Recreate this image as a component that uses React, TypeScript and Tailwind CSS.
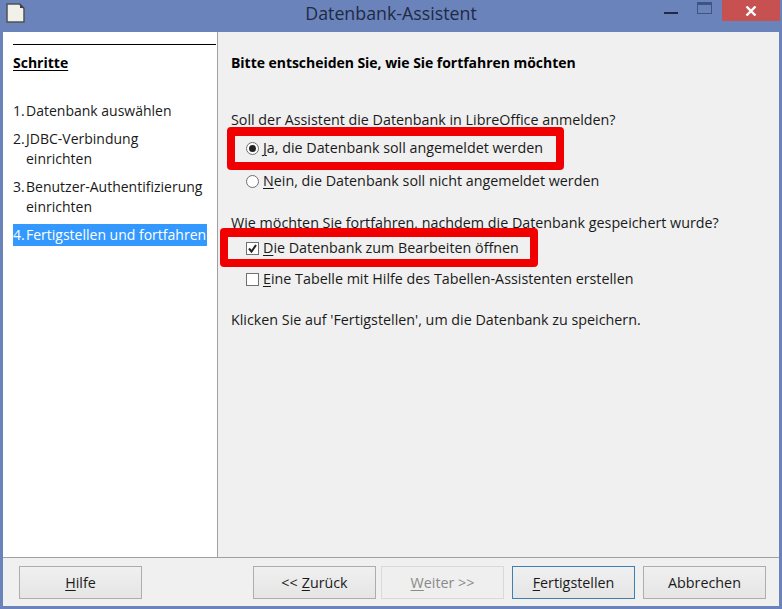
const font = { fontFamily: '"Open Sans", "Noto Sans", sans-serif' };

function U({ children }: { children: React.ReactNode }) {
  return <span className="underline underline-offset-2 decoration-1">{children}</span>;
}

function Btn({ children, className = "" }: { children: React.ReactNode; className?: string }) {
  return (
    <div className={`h-[33px] w-[123px] pt-[1px] flex items-center justify-center border bg-gradient-to-b from-[#f0f0f0] to-[#e5e5e5] ${className}`}>
      {children}
    </div>
  );
}

function Step({ n, children, active }: { n: string; children: React.ReactNode; active?: boolean }) {
  return (
    <div className={`flex w-[194px] leading-[20px] ${active ? "bg-[#3399ff] text-white py-[1px]" : ""}`}>
      <span className="w-[13px] shrink-0">{n}</span>
      <span>{children}</span>
    </div>
  );
}

export default function App() {
  return (
    <div className="w-[782px] h-[609px] bg-[#6b83bb] flex flex-col text-[14px] text-[#1a1a1a] overflow-hidden relative" style={font}>
      <div className="h-[32px] shrink-0 flex items-start relative">
        <svg className="absolute left-[6px] top-[3px]" width="19" height="20" viewBox="0 0 19 20">
          <path d="M1 1h12.5L18 5.5V19H1z" fill="#f1f1ea" stroke="#4f5156" strokeWidth="1.5" />
          <path d="M14 0.5l4.5 4.5h-4.5z" fill="#3f4145" />
        </svg>
        <div className="w-full text-center text-[17.8px] leading-[27px] text-[#1f2a44]">Datenbank-Assistent</div>
        <div className="absolute left-[664px] top-[12px] w-[14px] h-[2px] bg-[#1d2a40]" />
        <div className="absolute left-[697px] top-[2px] w-[15px] h-[12px] border border-[#3f5484] border-t-[3px]" />
        <div className="absolute left-[722px] top-0 w-[58px] h-[21px] bg-[#c75050] flex items-center justify-center">
          <svg width="12" height="10" viewBox="0 0 12 10">
            <path d="M1.5 0.5L10.5 9.5M10.5 0.5L1.5 9.5" stroke="#fff" strokeWidth="2.4" />
          </svg>
        </div>
      </div>

      <div className="flex-1 mx-[3px] mb-[3px] bg-[#f0f0f0] flex flex-col min-h-0">
        <div className="flex-1 flex min-h-0 border-b border-[#a0a0a0]">
          <div className="w-[215px] shrink-0 bg-white border-r border-[#a0a0a0] pl-[10px] pt-[12px]">
            <div className="w-[203px] border-t border-black" />
            <div className="font-bold underline underline-offset-2 mt-[8px] leading-[20px] text-black">Schritte</div>
            <div className="mt-[28px] flex flex-col gap-[8px]">
              <Step n="1.">Datenbank auswählen</Step>
              <Step n="2.">JDBC-Verbindung<br />einrichten</Step>
              <Step n="3.">Benutzer-Authentifizierung<br />einrichten</Step>
              <div className="-mt-[1px]">
                <Step n="4." active>Fertigstellen und fortfahren</Step>
              </div>
            </div>
          </div>

          <div className="flex-1 pl-[13px] pt-[21px] relative text-[14.3px]">
            <div className="font-bold leading-[20px] text-black text-[14px] tracking-[-0.04px]">Bitte entscheiden Sie, wie Sie fortfahren möchten</div>
            <div className="mt-[37px] leading-[20px]">Soll der Assistent die Datenbank in LibreOffice anmelden?</div>
            <div className="mt-[8px] flex flex-col gap-[13px] pl-[15px]">
              <div className="flex items-center leading-[20px]">
                <span className="w-[13px] h-[13px] rounded-full border border-[#707070] bg-white flex items-center justify-center mr-[4px]">
                  <span className="w-[7px] h-[7px] rounded-full bg-[#222]" />
                </span>
                <span><U>J</U>a, die Datenbank soll angemeldet werden</span>
              </div>
              <div className="flex items-center leading-[20px]">
                <span className="w-[13px] h-[13px] rounded-full border border-[#707070] bg-white mr-[4px]" />
                <span><U>N</U>ein, die Datenbank soll nicht angemeldet werden</span>
              </div>
            </div>
            <div className="mt-[22px] leading-[20px]">Wie möchten Sie fortfahren, nachdem die Datenbank gespeichert wurde?</div>
            <div className="mt-[5px] flex flex-col gap-[11px] pl-[15px]">
              <div className="flex items-center leading-[20px]">
                <span className="w-[13px] h-[13px] border border-[#707070] bg-white flex items-center justify-center mr-[4px]">
                  <svg width="11" height="11" viewBox="0 0 11 11">
                    <path d="M2 5.5L4.5 8.5L9 2" fill="none" stroke="#222" strokeWidth="2" />
                  </svg>
                </span>
                <span><U>D</U>ie Datenbank zum Bearbeiten öffnen</span>
              </div>
              <div className="flex items-center leading-[20px]">
                <span className="w-[13px] h-[13px] border border-[#707070] bg-white mr-[4px]" />
                <span><U>E</U>ine Tabelle mit Hilfe des Tabellen-Assistenten erstellen</span>
              </div>
            </div>
            <div className="mt-[21px] leading-[20px]">Klicken Sie auf 'Fertigstellen', um die Datenbank zu speichern.</div>

            <div className="absolute left-[9px] top-[95px] w-[337px] h-[43px] border-[8px] border-t-[9px] border-[#f00000] rounded-[4px]" />
            <div className="absolute left-[2px] top-[196px] w-[318px] h-[39px] border-[8px] border-t-[9px] border-[#f00000] rounded-[4px]" />
          </div>
        </div>

        <div className="h-[48px] shrink-0 flex items-center pl-[16px] pr-[13px] text-[14.3px]">
          <Btn className="border-[#adadad]"><U>H</U>ilfe</Btn>
          <div className="ml-auto flex gap-[5px]">
            <Btn className="border-[#adadad]">&lt;&lt; <span className="ml-1"><U>Z</U>urück</span></Btn>
            <Btn className="border-[#d9d9d9] text-[#8a8a8a] mr-[8px] !bg-none bg-[#efefef]"><span><U>W</U>eiter &gt;&gt;</span></Btn>
          </div>
          <div className="flex gap-[8px]">
            <Btn className="border-[#3c7fb1]"><span><U>F</U>ertigstellen</span></Btn>
            <Btn className="border-[#adadad]">Abbrechen</Btn>
          </div>
        </div>
      </div>
    </div>
  );
}
